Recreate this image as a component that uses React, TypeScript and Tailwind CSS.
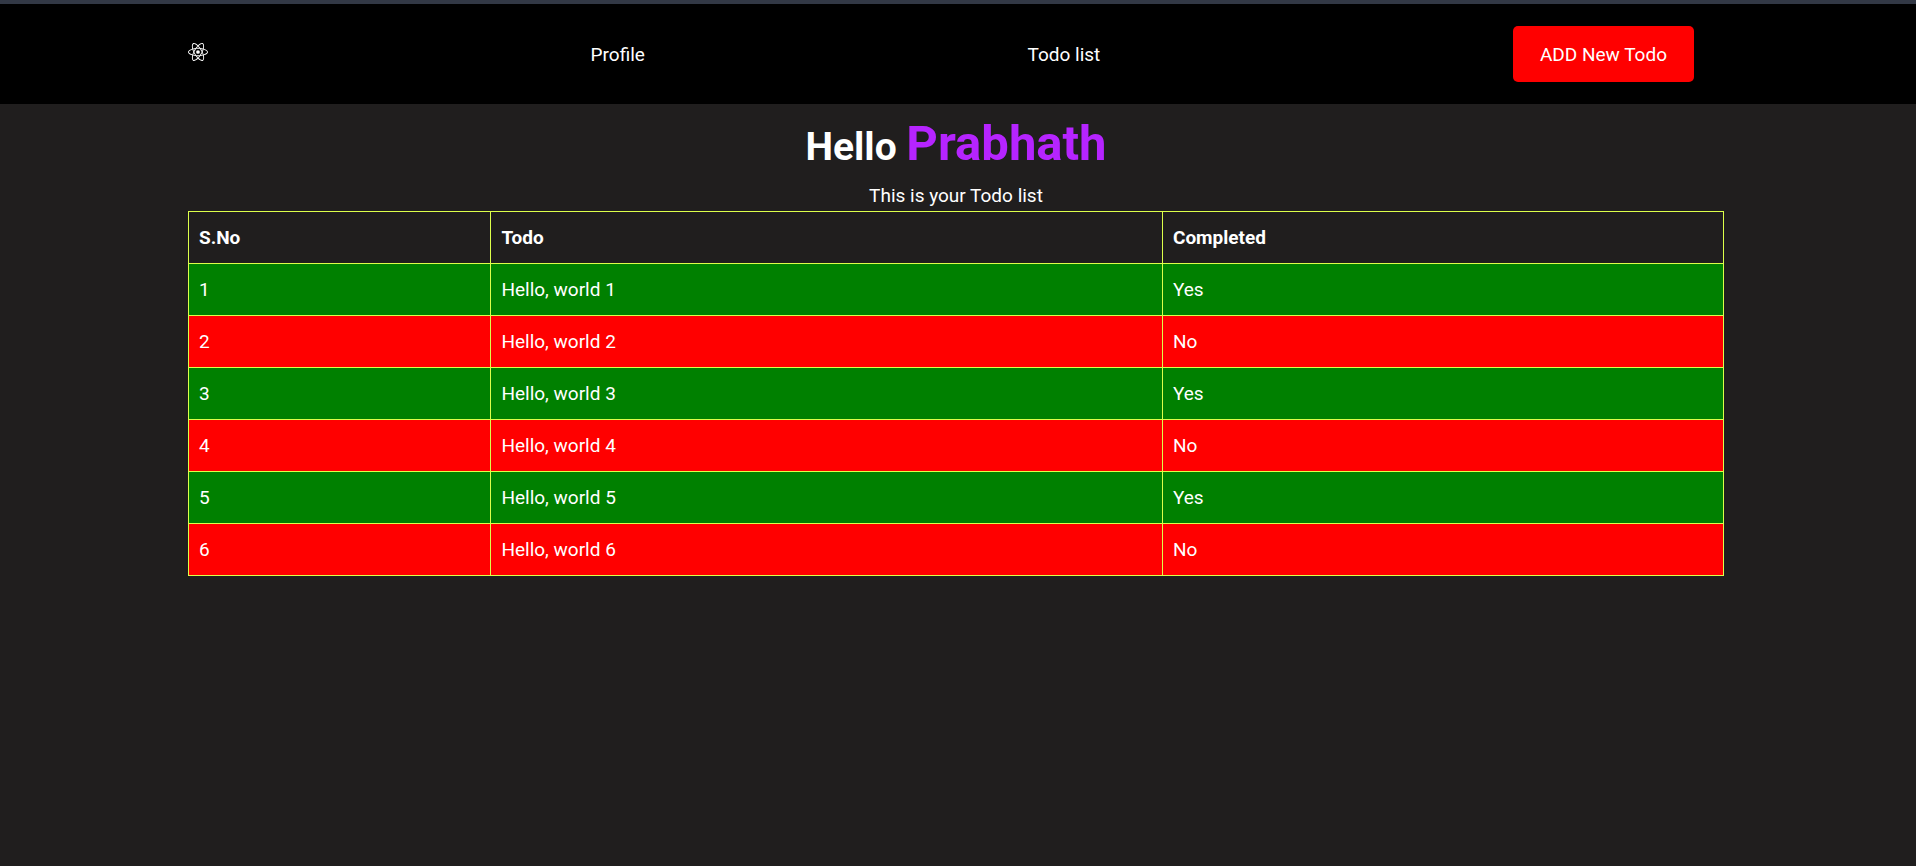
import { SiReact } from "react-icons/si";

const todos = [
  { id: 1, title: "Hello, world 1", completed: true },
  { id: 2, title: "Hello, world 2", completed: false },
  { id: 3, title: "Hello, world 3", completed: true },
  { id: 4, title: "Hello, world 4", completed: false },
  { id: 5, title: "Hello, world 5", completed: true },
  { id: 6, title: "Hello, world 6", completed: false },
];

const cell = "border border-[#ddff4a] px-2.5 text-left";

function Navbar() {
  return (
    <header className="border-t-4 border-[#323845] bg-black pr-1">
      <nav className="mx-auto flex h-25 max-w-screen-2xl items-center justify-between">
        <a href="#home" aria-label="Home" className="pb-1">
          <SiReact className="size-5" />
        </a>
        <a href="#profile" className="pt-0.5">Profile</a>
        <a href="#todos" className="pt-0.5">Todo list</a>
        <button type="button" className="mx-[30px] h-14 rounded-[5px] bg-[#ff0000] px-[27px] pt-0.5">
          ADD New Todo
        </button>
      </nav>
    </header>
  );
}

function TodoTable() {
  return (
    <table className="w-full table-fixed border-collapse">
      <thead>
        <tr className="h-[52px]">
          <th scope="col" className={`${cell} w-[19.7%]`}>S.No</th>
          <th scope="col" className={`${cell} w-[43.75%]`}>Todo</th>
          <th scope="col" className={cell}>Completed</th>
        </tr>
      </thead>
      <tbody>
        {todos.map((todo) => (
          <tr key={todo.id} className={`h-[52px] ${todo.completed ? "bg-[#008000]" : "bg-[#ff0000]"}`}>
            <td className={cell}>{todo.id}</td>
            <td className={cell}>{todo.title}</td>
            <td className={cell}>{todo.completed ? "Yes" : "No"}</td>
          </tr>
        ))}
      </tbody>
    </table>
  );
}

export default function App() {
  return (
    <div className="min-h-screen bg-[#201e1e] font-['Roboto',sans-serif] text-[19px] leading-[30px] text-white">
      <Navbar />
      <main className="pr-1">
        <div className="mx-auto max-w-screen-2xl">
          <h1 className="pt-1.5 text-center text-[39px] leading-[68px] font-bold">
            Hello <span className="text-[49px] text-[#b624ff]">Prabhath</span>
          </h1>
          <p className="text-center">This is your Todo list</p>
          <TodoTable />
        </div>
      </main>
    </div>
  );
}
